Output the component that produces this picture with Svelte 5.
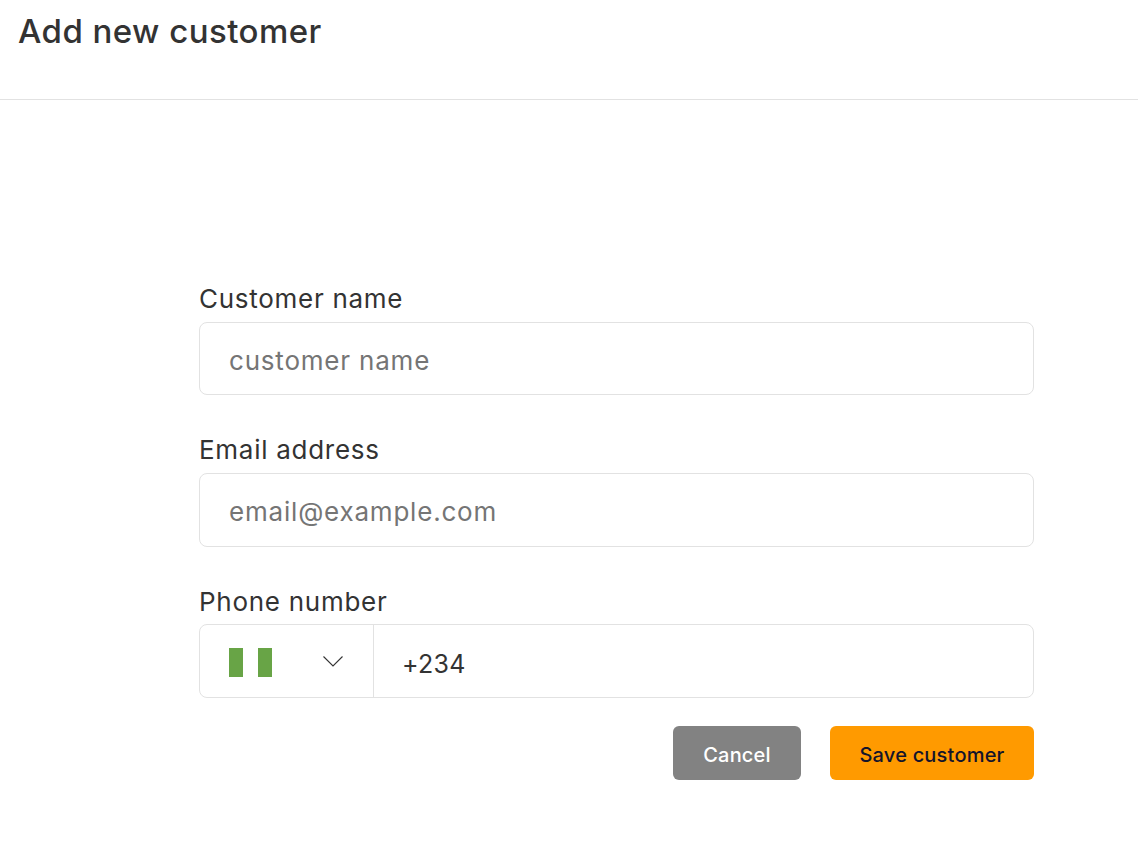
<script lang="ts">
  const phoneCode = '+234';
</script>

<div class="page">
  <header class="page-header">
    <h1>Add new customer</h1>
  </header>

  <form class="customer-form" onsubmit={(e) => e.preventDefault()}>
    <div class="field">
      <label for="name">Customer name</label>
      <input id="name" class="text-input first" type="text" placeholder="customer name" />
    </div>

    <div class="field">
      <label for="email">Email address</label>
      <input id="email" class="text-input" type="email" placeholder="email@example.com" />
    </div>

    <div class="field">
      <label for="phone" class="phone-label">Phone number</label>
      <div class="phone-input">
        <button type="button" class="country" aria-label="Select country">
          <span class="flag"><i></i><i></i></span>
          <svg width="20" height="11" viewBox="0 0 20 11" fill="none" stroke="#333" stroke-width="1.1">
            <path d="M0.5 0.5L10 10L19.5 0.5" />
          </svg>
        </button>
        <input id="phone" type="tel" value={phoneCode} />
      </div>
    </div>

    <div class="actions">
      <button type="button" class="btn cancel">Cancel</button>
      <button type="submit" class="btn save">Save customer</button>
    </div>
  </form>
</div>

<style>
  :global(body) {
    background: #fff;
  }

  .page {
    font-family: Inter, "Liberation Sans", sans-serif;
    color: #333;
    height: 868px;
  }

  .page-header {
    height: 88px;
    border-bottom: 1px solid #e2e2e2;
    padding: 11px 18px 0;
  }

  h1 {
    margin: 0;
    font-size: 33px;
    line-height: 40px;
    font-weight: 450;
    letter-spacing: 0.45px;
  }

  .customer-form {
    width: 835px;
    margin: 183px 0 0 199px;
    display: flex;
    flex-direction: column;
  }

  .field {
    display: flex;
    flex-direction: column;
    gap: 7px;
  }

  .field + .field {
    margin-top: 38px;
  }

  label {
    font-size: 26px;
    line-height: 32px;
    letter-spacing: 0.72px;
  }

  .text-input,
  .phone-input {
    height: 74px;
    box-sizing: border-box;
    border: 1px solid #e2e2e2;
    border-radius: 8px;
    background: #fff;
  }

  .text-input.first {
    height: 73px;
    margin-bottom: 1px;
    padding-top: 4px;
  }

  input {
    font-family: inherit;
    font-size: 26px;
    letter-spacing: 0.8px;
    color: #333;
    outline: none;
  }

  input::placeholder {
    color: #757575;
    opacity: 1;
  }

  .text-input {
    padding: 2px 29px 0;
    width: 100%;
  }

  .phone-input {
    display: flex;
  }

  .phone-input input {
    flex: 1;
    border: none;
    padding: 6px 28px 0;
    background: transparent;
    min-width: 0;
    font-size: 25px;
    letter-spacing: 0.3px;
  }

  .phone-label {
    padding-top: 1px;
    margin-bottom: -1px;
  }

  .country {
    width: 174px;
    flex: none;
    border: none;
    border-right: 1px solid #e2e2e2;
    background: none;
    padding: 0 30px 0 29px;
    display: flex;
    align-items: center;
    justify-content: space-between;
  }

  .flag {
    display: flex;
    width: 43px;
    height: 29px;
    margin-top: 2px;
    justify-content: space-between;
  }

  .flag i {
    width: 14px;
    background: #68a446;
  }

  .actions {
    display: flex;
    justify-content: flex-end;
    gap: 29px;
    margin-top: 28px;
  }

  .btn {
    height: 54px;
    border: none;
    border-radius: 6px;
    padding: 4px 0 0;
    font-family: inherit;
    font-size: 20px;
    font-weight: 450;
    letter-spacing: 0.2px;
  }

  .cancel {
    width: 128px;
    background: #828282;
    color: #fff;
  }

  .save {
    width: 204px;
    background: #ff9a00;
    color: #14142b;
  }
</style>
